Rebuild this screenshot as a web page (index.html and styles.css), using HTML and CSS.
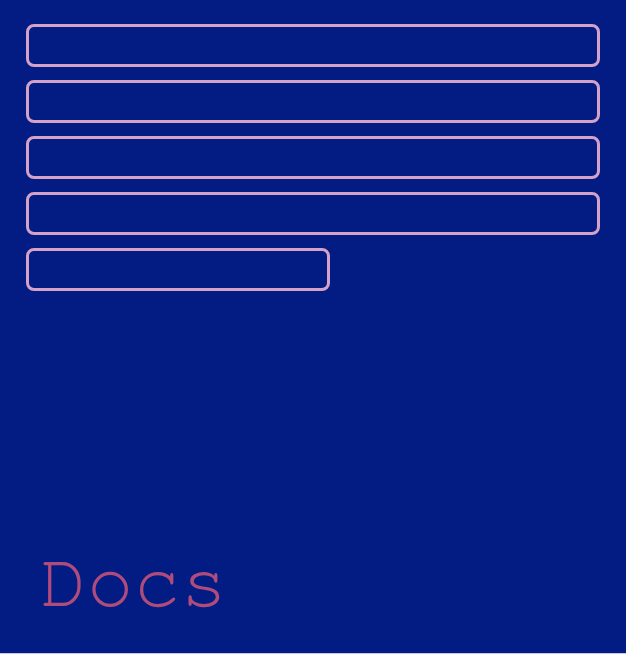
FILE: index.html
```html
<!DOCTYPE html>
<html lang="en">
<head>
<meta charset="utf-8">
<title>Docs</title>
<link rel="stylesheet" href="styles.css">
</head>
<body>
<div class="page">
  <div class="list">
    <div class="bar"></div>
    <div class="bar"></div>
    <div class="bar"></div>
    <div class="bar"></div>
    <div class="bar bar-short"></div>
  </div>
  <div class="footer">
    <span class="title">Docs</span>
  </div>
</div>
</body>
</html>
```
FILE: styles.css
```css
html {
  margin: 0;
  padding: 0;
  background: #c4c8de;
}
body {
  margin: 0;
  padding: 0;
  background: #031c84;
}
.page {
  box-sizing: border-box;
  height: 653px;
  padding: 24px 26px 0 26px;
  display: flex;
  flex-direction: column;
}
.list {
  display: flex;
  flex-direction: column;
  gap: 13px;
}
.bar {
  box-sizing: border-box;
  height: 43px;
  border: 3px solid #d4a2c8;
  border-radius: 8px;
}
.bar-short {
  width: 304px;
}
.footer {
  margin-top: auto;
  padding-left: 14px;
  padding-bottom: 31px;
}
.title {
  display: block;
  font-family: "Nimbus Mono PS", "FreeMono", "Courier New", Courier, monospace;
  font-size: 78px;
  line-height: 1;
  color: #b04c7c;
}
```
